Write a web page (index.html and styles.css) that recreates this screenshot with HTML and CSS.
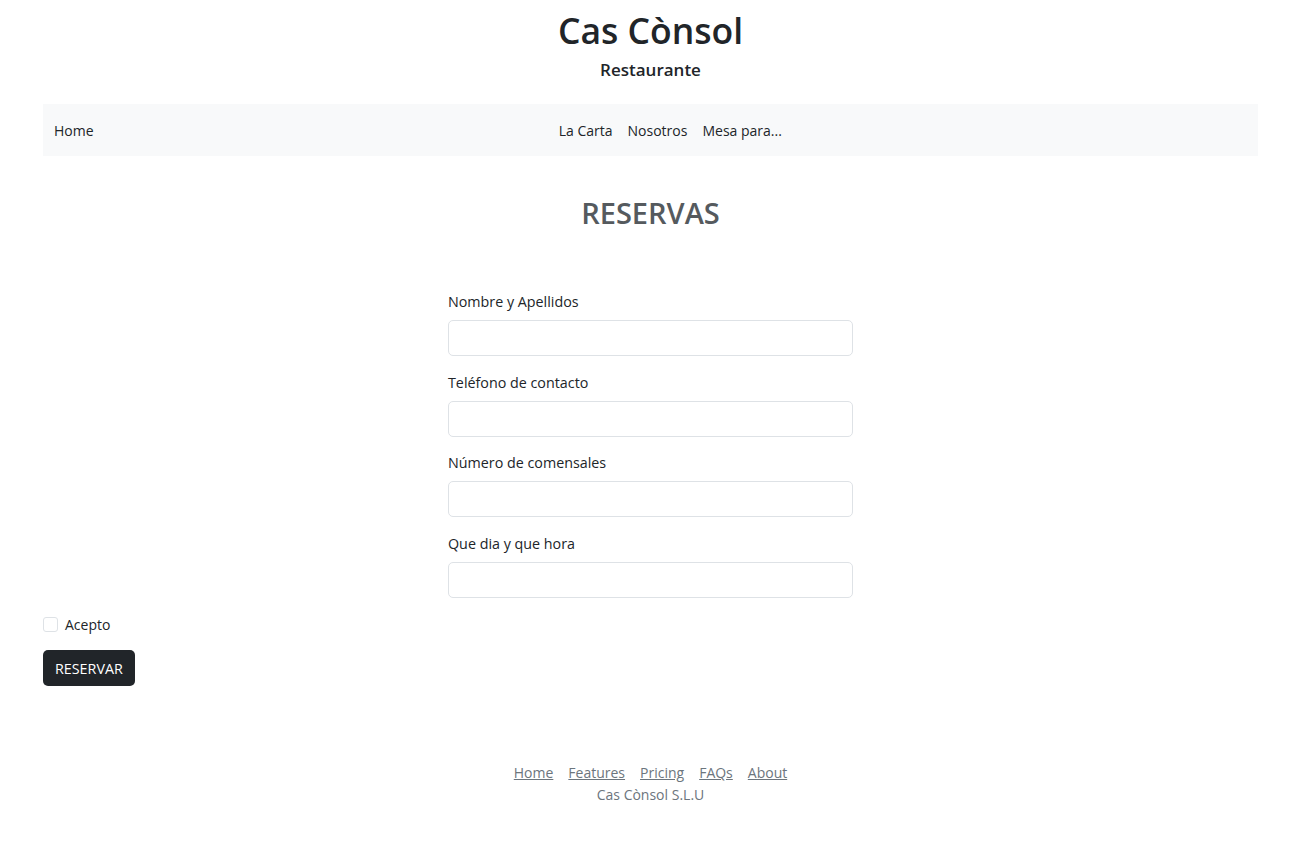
FILE: index.html
```html
<!DOCTYPE html>
<html lang="es">
<head>
<meta charset="utf-8">
<title>Cas Cònsol - Reservas</title>
<link rel="stylesheet" href="styles.css">
</head>
<body>
<div class="page">
  <header class="masthead">
    <h1 class="brand">Cas Cònsol</h1>
    <p class="tagline">Restaurante</p>
  </header>
  <nav class="navbar">
    <a class="nav-home" href="#">Home</a>
    <ul class="nav-links">
      <li><a href="#">La Carta</a></li>
      <li><a href="#">Nosotros</a></li>
      <li><a href="#">Mesa para...</a></li>
    </ul>
  </nav>
  <main>
    <h2 class="section-title">RESERVAS</h2>
    <form class="res-form">
      <div class="fields">
        <label class="field"><span class="label">Nombre y Apellidos</span><input type="text" class="input"></label>
        <label class="field"><span class="label">Teléfono de contacto</span><input type="text" class="input"></label>
        <label class="field"><span class="label">Número de comensales</span><input type="text" class="input"></label>
        <label class="field"><span class="label">Que dia y que hora</span><input type="text" class="input"></label>
      </div>
      <label class="check"><input type="checkbox" class="checkbox"><span>Acepto</span></label>
      <button type="button" class="btn">RESERVAR</button>
    </form>
  </main>
  <footer class="footer">
    <ul class="footer-links">
      <li><a href="#">Home</a></li>
      <li><a href="#">Features</a></li>
      <li><a href="#">Pricing</a></li>
      <li><a href="#">FAQs</a></li>
      <li><a href="#">About</a></li>
    </ul>
    <p class="copy">Cas Cònsol S.L.U</p>
  </footer>
</div>
</body>
</html>
```
FILE: styles.css
```css
* { box-sizing: border-box; }
html, body { margin: 0; padding: 0; }
body {
  font-family: "Open Sans", "Noto Sans", "Liberation Sans", sans-serif;
  font-size: 14px;
  color: #212529;
  background: #fff;
}
.page { padding: 0 54px 0 43px; }
.masthead { text-align: center; padding-top: 8px; }
.brand {
  margin: 0;
  font-size: 35.5px;
  font-weight: 600;
  line-height: 44px;
}
.tagline {
  margin: 7px 0 0;
  font-size: 17px;
  font-weight: 600;
  line-height: 22px;
}
.navbar {
  margin-top: 23px;
  height: 52px;
  background: #f8f9fa;
  display: flex;
  align-items: center;
  padding: 0 11px;
}
.navbar a { color: #212529; text-decoration: none; }
.nav-links {
  list-style: none;
  margin: 0 auto;
  padding: 0;
  display: flex;
  gap: 15px;
}
.section-title {
  text-align: center;
  margin: 40px 0 0;
  font-size: 29px;
  font-weight: 600;
  line-height: 34px;
  color: #555a5e;
}
.res-form { margin-top: 61px; }
.fields {
  width: 405px;
  margin: 0 auto;
  display: flex;
  flex-direction: column;
  gap: 15.7px;
}
.field { display: flex; flex-direction: column; }
.label { line-height: 22px; margin-bottom: 7px; font-size: 14.3px; }
.input {
  height: 36px;
  border: 1px solid #dee2e6;
  border-radius: 5px;
  font: inherit;
  padding: 6px 12px;
  background: #fff;
}
.check {
  display: flex;
  align-items: center;
  gap: 7px;
  margin-top: 17px;
}
.checkbox {
  appearance: none;
  -webkit-appearance: none;
  width: 15px;
  height: 15px;
  margin: 0;
  border: 1px solid #dee2e6;
  border-radius: 3px;
  background: #fff;
}
.btn {
  margin-top: 16px;
  height: 36px;
  padding: 0 12px;
  background: #212529;
  color: #fff;
  border: 0;
  border-radius: 5px;
  font: inherit;
  font-size: 14.3px;
}
.footer { text-align: center; margin-top: 76px; color: #6c757d; }
.footer-links {
  list-style: none;
  margin: 0;
  padding: 0;
  display: flex;
  justify-content: center;
  gap: 15px;
  line-height: 22px;
}
.footer-links a { color: #6c757d; }
.copy { margin: 0; line-height: 22px; }
```
